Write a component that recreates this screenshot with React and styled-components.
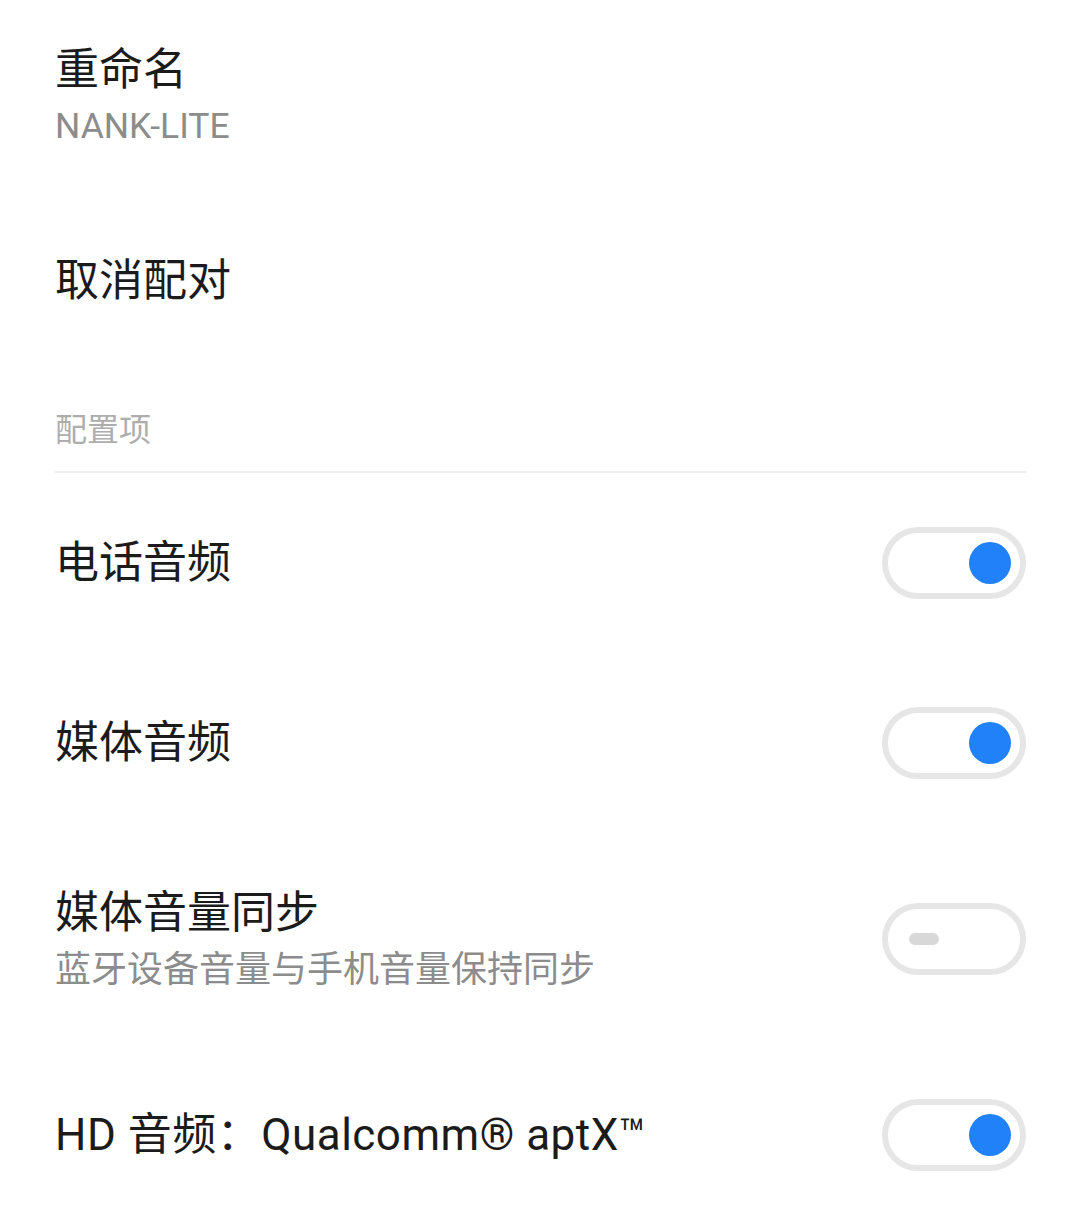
import styled, { createGlobalStyle } from "styled-components";

const GlobalStyle = createGlobalStyle`
    html, body {
        margin: 0;
        padding: 0;
        background: #ffffff;
    }

    body {
        font-family: Roboto, "Noto Sans CJK SC", sans-serif;
        -webkit-font-smoothing: antialiased;
    }
`;

const Page = styled.div`
    width: 1080px;
    min-height: 1207px;
    box-sizing: border-box;
    padding: 0 54px 0 55px;
    background: #ffffff;
`;

const Item = styled.div`
    display: flex;
    flex-direction: column;
    justify-content: center;
    gap: ${({ $gap }) => $gap || 0}px;
    height: ${({ $height }) => $height}px;
    box-sizing: border-box;
`;

const Title = styled.div`
    font-size: 44px;
    line-height: 58px;
    color: #1b1b1b;
    letter-spacing: ${({ $spacing }) => $spacing || 0}px;
`;

const Sub = styled.div`
    font-size: ${({ $size }) => $size || 35.5}px;
    line-height: ${({ $lh }) => $lh || 50}px;
    color: #8c8c8c;
`;

const SectionHeader = styled.div`
    padding: 37px 0 19px;
    font-size: 32px;
    line-height: 44px;
    color: #adadad;
    border-bottom: 2px solid #f0f0f0;
`;

const Row = styled.div`
    display: flex;
    align-items: center;
    justify-content: space-between;
    height: ${({ $height }) => $height}px;
`;

const Texts = styled.div`
    display: flex;
    flex-direction: column;
    gap: 2px;
    padding-top: 2px;
`;

const Track = styled.div`
    display: flex;
    align-items: center;
    justify-content: ${({ $on }) => ($on ? "flex-end" : "flex-start")};
    width: 144px;
    height: 72px;
    box-sizing: border-box;
    border: 6px solid #e6e6e6;
    border-radius: 36px;
    padding: ${({ $on }) => ($on ? "0 9px" : "0 21px")};
    flex-shrink: 0;
`;

const Knob = styled.div`
    width: 42px;
    height: 42px;
    border-radius: 50%;
    background: #2181f9;
`;

const OffMark = styled.div`
    width: 30px;
    height: 12px;
    border-radius: 6px;
    background: #d8d8d8;
`;

const Switch = ({ on }) => (
    <Track $on={on}>{on ? <Knob /> : <OffMark />}</Track>
);

const settings = [
    { title: "电话音频", on: true },
    { title: "媒体音频", on: true },
    { title: "媒体音量同步", desc: "蓝牙设备音量与手机音量保持同步", on: false },
    { title: "HD 音频：Qualcomm® aptX™", on: true, spacing: 0.5 },
];

const App = () => (
    <>
        <GlobalStyle />
        <Page>
            <Item $height={191} $gap={2}>
                <Title>重命名</Title>
                <Sub>NANK-LITE</Sub>
            </Item>
            <Item $height={180}>
                <Title>取消配对</Title>
            </Item>
            <SectionHeader>配置项</SectionHeader>
            {settings.map((item) => (
                <Row key={item.title} $height={item.desc ? 212 : 180}>
                    {item.desc ? (
                        <Texts>
                            <Title>{item.title}</Title>
                            <Sub $size={36} $lh={52}>{item.desc}</Sub>
                        </Texts>
                    ) : (
                        <Title $spacing={item.spacing}>{item.title}</Title>
                    )}
                    <Switch on={item.on} />
                </Row>
            ))}
        </Page>
    </>
);

export default App;
